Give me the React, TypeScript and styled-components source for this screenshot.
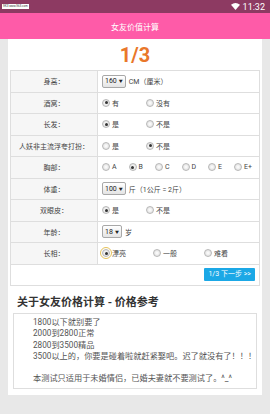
import React from 'react';
import styled, { createGlobalStyle } from 'styled-components';

const GlobalStyle = createGlobalStyle`
  html, body {
    margin: 0;
    padding: 0;
    background: #e8e8e8;
    font-family: Roboto, "Noto Sans CJK SC", sans-serif;
  }
`;

const Screen = styled.div`
  width: 270px;
  height: 414px;
  background: #e8e8e8;
  overflow: hidden;
`;

const StatusBar = styled.div`
  height: 13px;
  background: #8d3a62;
  display: flex;
  align-items: center;
  justify-content: space-between;
  padding: 0 5px 0 2px;
`;

const SiteTag = styled.div`
  background: #fff;
  color: #333;
  font-size: 3px;
  line-height: 5px;
  height: 5px;
  padding: 0 1px;
  white-space: nowrap;
  font-family: "Liberation Sans", sans-serif;
`;

const StatusRight = styled.div`
  display: flex;
  align-items: center;
  gap: 3px;
  color: #fff;
  font-size: 9px;
  font-family: Roboto, sans-serif;
`;

const TitleBar = styled.div`
  height: 26px;
  background: #fe5ba8;
  color: #fff;
  font-size: 8px;
  display: flex;
  align-items: center;
  justify-content: center;
`;

const Body = styled.div`
  padding: 0 8px;
`;

const Panel = styled.div`
  background: #fff;
  height: 356px;
  padding: 0 2px;
  box-sizing: border-box;
`;

const Step = styled.div`
  height: 31px;
  line-height: 32px;
  text-align: center;
  color: #e9772a;
  font-size: 20px;
  font-weight: bold;
`;

const FormTable = styled.div`
  display: grid;
  grid-template-columns: 87px 1fr;
  grid-auto-rows: 21.5px;
  border-top: 1px solid #dedede;
  border-left: 1px solid #dedede;
`;

const Label = styled.div`
  background: #f6f6f6;
  border-right: 1px solid #dedede;
  border-bottom: 1px solid #dedede;
  display: flex;
  align-items: center;
  justify-content: center;
  font-size: 7px;
  color: #444;
`;

const Value = styled.div<{ gap?: number }>`
  border-right: 1px solid #dedede;
  border-bottom: 1px solid #dedede;
  display: flex;
  align-items: center;
  gap: ${(p) => p.gap ?? 4}px;
  padding-left: 4px;
  font-size: 7px;
  color: #444;
`;

const ButtonRow = styled.div`
  grid-column: 1 / span 2;
  border-right: 1px solid #dedede;
  border-bottom: 1px solid #dedede;
  display: flex;
  align-items: center;
  justify-content: flex-end;
  padding-right: 4px;
`;

const NextButton = styled.div`
  background: #1ba8e6;
  color: #fff;
  font-size: 7px;
  height: 13px;
  line-height: 13px;
  padding: 0 4px;
  border-radius: 1px;
`;

const Select = styled.div`
  display: flex;
  align-items: center;
  gap: 2px;
  height: 11px;
  padding: 0 2px;
  border: 1px solid #a8a8a8;
  border-radius: 2px;
  background: linear-gradient(#ffffff, #e4e4e4);
  font-size: 7px;
  color: #222;
  &::after {
    content: '▼';
    font-size: 4px;
  }
`;

const Option = styled.label`
  display: flex;
  align-items: center;
  gap: 2px;
`;

const Radio = styled.span<{ checked?: boolean; focus?: boolean }>`
  position: relative;
  width: 6px;
  height: 6px;
  border-radius: 50%;
  border: 1px solid #b8b8b8;
  background: radial-gradient(#ffffff, #d8d8d8);
  outline: ${(p) => (p.focus ? '1px solid #e6c25a' : 'none')};
  outline-offset: 1px;
  &::after {
    content: '';
    display: ${(p) => (p.checked ? 'block' : 'none')};
    position: absolute;
    left: 1.5px;
    top: 1.5px;
    width: 3px;
    height: 3px;
    border-radius: 50%;
    background: #333;
  }
`;

const SectionTitle = styled.h2`
  margin: 10px 0 3px 7px;
  font-size: 11px;
  line-height: 14px;
  color: #333;
  font-weight: bold;
`;

const InfoBox = styled.div`
  margin: 0 3px;
  border: 1px solid #dedede;
  padding: 3px 0 3px 19px;
  font-size: 8.2px;
  line-height: 11.3px;
  color: #555;
`;

const Line = styled.div`
  min-height: 11.3px;
  white-space: nowrap;
`;

type Opt = { text: string; checked?: boolean; focus?: boolean };

const Radios = ({ options }: { options: Opt[] }) => (
  <>
    {options.map((o) => (
      <Option key={o.text}>
        <Radio checked={o.checked} focus={o.focus} />
        {o.text}
      </Option>
    ))}
  </>
);

const Wifi = () => (
  <svg width="9" height="7" viewBox="0 0 18 14">
    <path d="M9 14 L0 3.5 Q9 -3.5 18 3.5 Z" fill="#fff" />
  </svg>
);

const notes = [
  '1800以下就别要了',
  '2000到2800正常',
  '2800到3500精品',
  '3500以上的，你要是碰着啦就赶紧娶吧。迟了就没有了！！！',
  '',
  '本测试只适用于未婚情侣，已婚夫妻就不要测试了。^_^',
];

export default function App() {
  return (
    <Screen>
      <GlobalStyle />
      <StatusBar>
        <SiteTag>9K3 www.9k3.com</SiteTag>
        <StatusRight>
          <Wifi />
          11:32
        </StatusRight>
      </StatusBar>
      <TitleBar>女友价值计算</TitleBar>
      <Body>
        <Panel>
          <Step>1/3</Step>
          <FormTable>
            <Label>身高：</Label>
            <Value gap={3}>
              <Select>160</Select>CM（厘米）
            </Value>

            <Label>酒窝：</Label>
            <Value gap={27}>
              <Radios options={[{ text: '有', checked: true }, { text: '没有' }]} />
            </Value>

            <Label>长发：</Label>
            <Value gap={27}>
              <Radios options={[{ text: '是', checked: true }, { text: '不是' }]} />
            </Value>

            <Label>人妖非主流浮夸打扮：</Label>
            <Value gap={27}>
              <Radios options={[{ text: '是' }, { text: '不是', checked: true }]} />
            </Value>

            <Label>胸部：</Label>
            <Value gap={12}>
              <Radios
                options={[
                  { text: 'A' },
                  { text: 'B', checked: true },
                  { text: 'C' },
                  { text: 'D' },
                  { text: 'E' },
                  { text: 'E+' },
                ]}
              />
            </Value>

            <Label>体重：</Label>
            <Value gap={3}>
              <Select>100</Select>斤（1公斤 = 2斤）
            </Value>

            <Label>双眼皮：</Label>
            <Value gap={27}>
              <Radios options={[{ text: '是', checked: true }, { text: '不是' }]} />
            </Value>

            <Label>年龄：</Label>
            <Value gap={3}>
              <Select>18</Select>岁
            </Value>

            <Label>长相：</Label>
            <Value gap={27}>
              <Radios
                options={[
                  { text: '漂亮', checked: true, focus: true },
                  { text: '一般' },
                  { text: '难看' },
                ]}
              />
            </Value>

            <ButtonRow>
              <NextButton>1/3 下一步 &gt;&gt;</NextButton>
            </ButtonRow>
          </FormTable>

          <SectionTitle>关于女友价格计算 - 价格参考</SectionTitle>
          <InfoBox>
            {notes.map((n, i) => (
              <Line key={i}>{n}</Line>
            ))}
          </InfoBox>
        </Panel>
      </Body>
    </Screen>
  );
}
